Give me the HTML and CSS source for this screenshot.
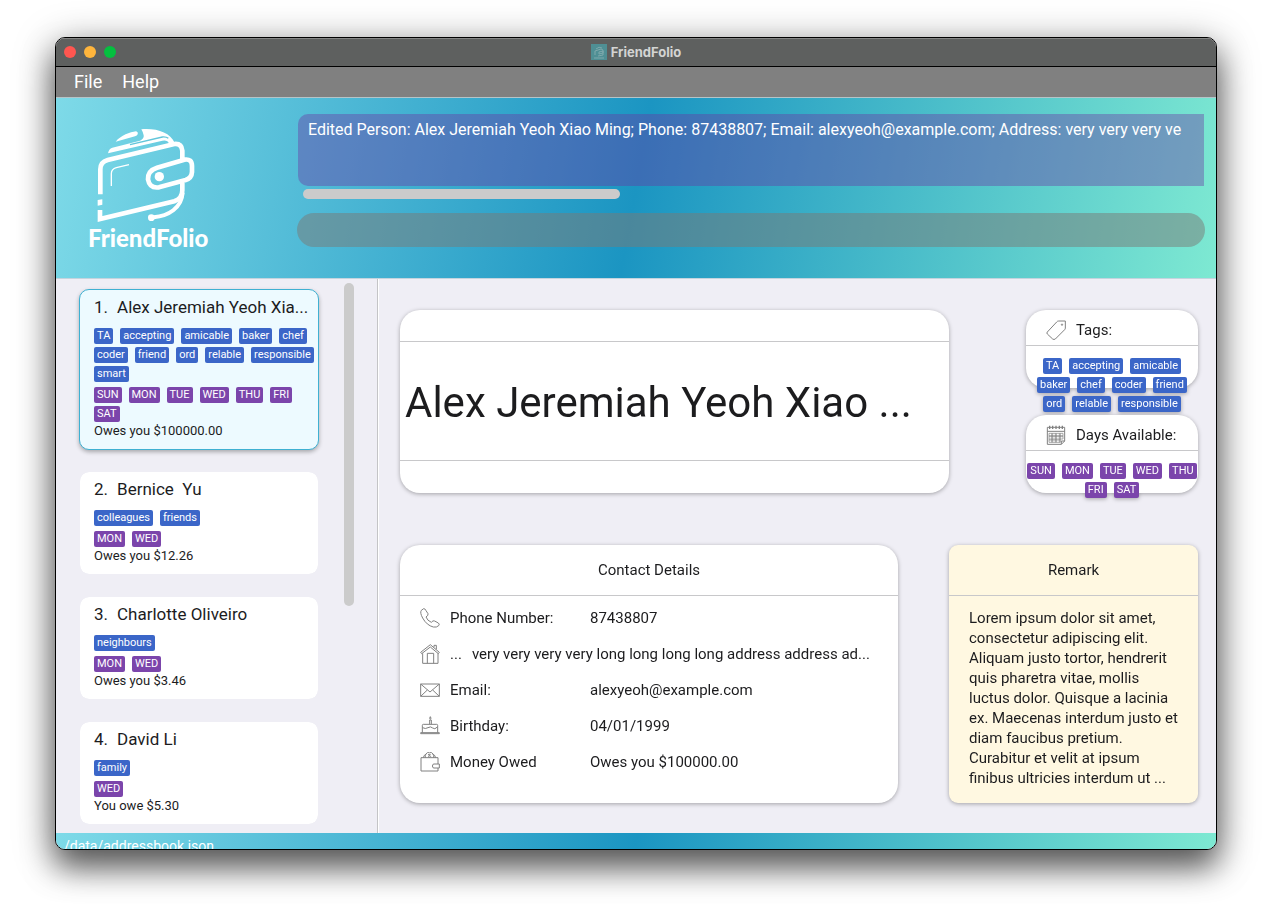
FILE: index.html
```html
<!DOCTYPE html>
<html lang="en">
<head>
<meta charset="utf-8">
<title>FriendFolio</title>
<link rel="stylesheet" href="styles.css">
</head>
<body>
<div class="window">
  <div class="titlebar">
    <div class="lights">
      <button class="light close" aria-label="Close"></button>
      <button class="light minimise" aria-label="Minimise"></button>
      <button class="light zoom" aria-label="Zoom"></button>
    </div>
    <div class="app-title">
      <svg class="app-icon" viewBox="0 0 16 16" aria-hidden="true"><rect width="16" height="16" fill="#4f8f94"/><path d="M4 11V7l6-2 2 1v5l-5 1M5 5q3-3 6-1M8 8l4-1v2l-4 1zM3 14h10" fill="none" stroke="#7fa9ac"/></svg>
      <span>FriendFolio</span>
    </div>
  </div>
  <nav class="menubar">
    <button class="menu">File</button>
    <button class="menu">Help</button>
  </nav>
  <header class="header">
    <div class="brand">
      <svg class="logo" viewBox="60 35 306 285" aria-hidden="true">
        <g fill="none" stroke="#fff" stroke-width="14">
          <path d="M76 237V162Q76 140 98 134L298 86Q320 84 322 106V136"/>
          <path d="M75 284V311L298 258Q322 250 322 225V203"/>
          <path d="M246 157L328 133Q351 129 351 152V170Q350 188 332 194L252 216Q224 220 219 192Q218 166 246 157Z"/>
          <path d="M323 232C320 278 280 302 236 306" stroke-width="12"/>
          <path d="M109 212V175Q109 161 124 157L162 148" stroke-width="4"/>
        </g>
        <g fill="#fff">
          <path d="M68 254L82 252V268L68 271Z"/>
          <circle cx="229" cy="307" r="10"/>
          <circle cx="253" cy="184" r="14"/>
          <path d="M99 114Q101 101 112 97L195 76Q208 70 206 60Q204 50 199 42C245 38 285 52 299 82L282 85Q278 73 262 76Z"/>
          <path d="M122 79C138 60 165 50 183 48Q190 50 188 57Q186 62 180 63Z"/>
        </g>
        <path d="M165 88L262 65Q274 64 280 69" fill="none" stroke="#62c6da" stroke-width="4"/>
      </svg>
      <span class="brand-name">FriendFolio</span>
    </div>
    <div class="console">
      <div class="result-wrap">
        <p class="result" role="status">Edited Person: Alex Jeremiah Yeoh Xiao Ming; Phone: 87438807; Email: alexyeoh@example.com; Address: very very very ve</p>
        <div class="hscroll"></div>
      </div>
      <input class="command" type="text" aria-label="Command">
    </div>
  </header>
  <main class="content">
    <section class="list-pane">
      <ol class="people">
        <li class="person selected">
          <h2 class="person-name"><span>1.</span><span>Alex Jeremiah Yeoh Xia...</span></h2>
          <div class="chips"><span class="chip">TA</span><span class="chip">accepting</span><span class="chip">amicable</span><span class="chip">baker</span><span class="chip">chef</span><span class="chip">coder</span><span class="chip">friend</span><span class="chip">ord</span><span class="chip">relable</span><span class="chip">responsible</span><span class="chip">smart</span></div>
          <div class="chips days"><span class="chip">SUN</span><span class="chip">MON</span><span class="chip">TUE</span><span class="chip">WED</span><span class="chip">THU</span><span class="chip">FRI</span><span class="chip">SAT</span></div>
          <p class="debt">Owes you $100000.00</p>
        </li>
        <li class="person">
          <h2 class="person-name"><span>2.</span><span>Bernice&nbsp; Yu</span></h2>
          <div class="chips"><span class="chip">colleagues</span><span class="chip">friends</span></div>
          <div class="chips days"><span class="chip">MON</span><span class="chip">WED</span></div>
          <p class="debt">Owes you $12.26</p>
        </li>
        <li class="person">
          <h2 class="person-name"><span>3.</span><span>Charlotte Oliveiro</span></h2>
          <div class="chips"><span class="chip">neighbours</span></div>
          <div class="chips days"><span class="chip">MON</span><span class="chip">WED</span></div>
          <p class="debt">Owes you $3.46</p>
        </li>
        <li class="person">
          <h2 class="person-name"><span>4.</span><span>David Li</span></h2>
          <div class="chips"><span class="chip">family</span></div>
          <div class="chips days"><span class="chip">WED</span></div>
          <p class="debt">You owe $5.30</p>
        </li>
      </ol>
      <div class="vscroll"></div>
    </section>
    <section class="detail">
      <div class="row summary">
        <article class="card name-card">
          <h1 class="full-name">Alex Jeremiah Yeoh Xiao ...</h1>
        </article>
        <div class="side">
          <article class="card side-card">
            <h3 class="side-title">
              <svg class="icon" viewBox="0 0 60 60" aria-hidden="true"><path d="M4 36L32 6Q34 3 38 3H58V24Q58 27 56 29L28 57Q24 60 20 57L4 42Q1 39 4 36Z"/><circle cx="48" cy="14" r="2"/></svg>
              Tags:
            </h3>
            <div class="chips centred inset"><span class="chip">TA</span><span class="chip">accepting</span><span class="chip">amicable</span><span class="chip">baker</span><span class="chip">chef</span><span class="chip">coder</span><span class="chip">friend</span><span class="chip">ord</span><span class="chip">relable</span><span class="chip">responsible</span></div>
          </article>
          <article class="card side-card">
            <h3 class="side-title">
              <svg class="icon" viewBox="0 0 60 60" aria-hidden="true"><path d="M4 7H56V48L46 58H4ZM4 19H56M46 58V48H56"/><path d="M11 2V12M20 2V12M30 2V12M40 2V12M49 2V12" stroke-width="4"/><path d="M9 25H51M9 32H51M9 35H51M9 42H51M9 45H43M9 52H43M9 25V52M17 25V52M20 25V52M28 25V52M31 25V52M40 25V52M43 25V52M51 25V42" stroke-width="2"/></svg>
              Days Available:
            </h3>
            <div class="chips days centred"><span class="chip">SUN</span><span class="chip">MON</span><span class="chip">TUE</span><span class="chip">WED</span><span class="chip">THU</span><span class="chip">FRI</span><span class="chip">SAT</span></div>
          </article>
        </div>
      </div>
      <div class="row info">
        <article class="card contact">
          <h3 class="card-title">Contact Details</h3>
          <dl class="fields">
            <div class="field">
              <svg class="icon" viewBox="0 0 60 60" aria-hidden="true"><path d="M4 7L11 2Q15 1 18 8L24 17Q26 22 18 27Q22 38 34 43Q39 36 44 39L55 45Q60 48 56 53Q50 59 40 57Q20 52 8 30Q-1 14 4 7Z"/></svg>
              <dt>Phone Number:</dt><dd>87438807</dd>
            </div>
            <div class="field long">
              <svg class="icon" viewBox="0 0 60 60" aria-hidden="true"><path d="M2 25L31 2L58 25L55 29L31 9L5 29ZM8 28V58H54V28M22 58V28H41V58M42 10V4H49V16"/></svg>
              <dt>...</dt><dd>very very very very long long long long address address ad...</dd>
            </div>
            <div class="field">
              <svg class="icon" viewBox="0 0 60 60" aria-hidden="true"><path d="M2 12H58V49H2ZM2 12L30 36L58 12M2 49L22 30M58 49L38 30"/></svg>
              <dt>Email:</dt><dd>alexyeoh@example.com</dd>
            </div>
            <div class="field">
              <svg class="icon" viewBox="0 0 60 60" aria-hidden="true"><path d="M2 50H58V53H2ZM7 50V28Q7 25 10 25H50Q53 25 53 28V50M8 35Q16 40 24 35T38 36T52 33M29 25V12H34V25M31 2Q27 7 31 10Q35 7 31 2Z"/></svg>
              <dt>Birthday:</dt><dd>04/01/1999</dd>
            </div>
            <div class="field">
              <svg class="icon" viewBox="0 0 60 60" aria-hidden="true"><path d="M54 36V17H3V57H54V48M58 36V48H40Q34 42 40 36ZM16 17A13 13 0 1 1 41 17M10 17Q12 8 18 7M47 17Q45 8 38 7M32 7Q24 5 25 9Q31 10 32 13Q30 17 24 14"/></svg>
              <dt>Money Owed</dt><dd>Owes you $100000.00</dd>
            </div>
          </dl>
        </article>
        <article class="card remark">
          <h3 class="card-title">Remark</h3>
          <p class="remark-text">Lorem ipsum dolor sit amet,<br>consectetur adipiscing elit.<br>Aliquam justo tortor, hendrerit<br>quis pharetra vitae, mollis<br>luctus dolor. Quisque a lacinia<br>ex. Maecenas interdum justo et<br>diam faucibus pretium.<br>Curabitur et velit at ipsum<br>finibus ultricies interdum ut ...</p>
        </article>
      </div>
    </section>
  </main>
  <footer class="statusbar">/data/addressbook.json</footer>
</div>
</body>
</html>
```
FILE: styles.css
```css
* { box-sizing: border-box; }

body {
  margin: 0;
  height: 100vh;
  padding: 37px 55px 73px;
  overflow: hidden;
  background: #fff;
  color: #1c1c1e;
  font-family: Roboto, "Liberation Sans", sans-serif;
  font-size: 15px;
  line-height: 20px;
}

h1, h2, h3, p, ol, dl, dd { margin: 0; padding: 0; font-weight: 400; }
ol { list-style: none; }
button { border: 0; padding: 0; background: none; font: inherit; color: inherit; }

.window {
  display: flex;
  flex-direction: column;
  height: 100%;
  border: 1px solid #000;
  border-radius: 10px;
  overflow: hidden;
  background: #efeef5;
  box-shadow: 0 18px 30px rgba(0, 0, 0, 0.5), 0 8px 40px rgba(0, 0, 0, 0.4);
}

.titlebar {
  display: grid;
  grid-template-columns: 1fr auto 1fr;
  align-items: center;
  flex: none;
  height: 29px;
  padding: 0 8px 2px;
  background: #5e605f;
  border-top: 1px solid #858685;
  border-bottom: 1px solid #000;
}
.lights { display: flex; gap: 8px; }
.light { width: 12px; height: 12px; border-radius: 50%; }
.close { background: #ff5650; }
.minimise { background: #ffb53c; }
.zoom { background: #04c03f; }
.app-title {
  display: flex;
  align-items: center;
  gap: 4px;
  color: #d3d4d3;
  font: 700 13px/16px Inter, sans-serif;
}
.app-icon { width: 16px; height: 16px; }

.menubar {
  display: flex;
  gap: 20px;
  flex: none;
  height: 30px;
  padding: 0 18px;
  background: #808080;
  color: #fff;
  font-size: 18px;
}

.header {
  display: flex;
  flex: none;
  height: 182px;
  padding: 16px 11px 0 0;
  border-top: 1px solid #b5c4c8;
  border-bottom: 1px solid #c4d4de;
}
.header, .statusbar {
  background: linear-gradient(100deg, #7edae8 0%, #1b95c2 50%, #7ee9d2 100%);
}
.brand {
  display: flex;
  flex-direction: column;
  flex: none;
  width: 241px;
  padding: 13px 0 0 32px;
  color: #fff;
}
.logo { width: 102px; height: 95px; margin-left: 7px; }
.brand-name { font: 900 24px/32px Lato, sans-serif; }

.console { display: flex; flex-direction: column; flex: 1; min-width: 0; }
.result-wrap { padding: 0 1px; }
.result {
  height: 72px;
  padding: 6px 0 0 10px;
  overflow: hidden;
  white-space: nowrap;
  border-radius: 10px 0 0 10px;
  background: rgba(107, 52, 162, 0.4);
  color: #fff;
  font-size: 16px;
}
.hscroll {
  width: 35%;
  height: 10px;
  margin: 3px 0 0 5px;
  border-radius: 5px;
  background: #cbcbcb;
}
.command {
  width: 100%;
  height: 34px;
  margin-top: 14px;
  padding: 0 14px;
  border: 0;
  border-radius: 17px;
  background: rgba(121, 121, 118, 0.5);
  color: #fff;
  font: inherit;
}

.content { display: flex; flex: 1; min-height: 0; }
.list-pane {
  display: flex;
  flex: none;
  width: 322px;
  padding: 0 23px;
  border-right: 1px solid #c4c4c6;
  overflow: hidden;
}
.people {
  display: flex;
  flex-direction: column;
  gap: 21px;
  flex: 1;
  min-width: 0;
  padding-top: 10px;
}
.person {
  flex: none;
  padding: 6px 0 9px 14px;
  border: 1px solid #efeef5;
  border-radius: 10px;
  background: #fff;
  background-clip: padding-box;
}
.person.selected {
  background: #edfaff;
  border-color: #3fb0d2;
  box-shadow: 0 2px 4px rgba(0, 0, 0, 0.3);
}
.person-name {
  display: flex;
  gap: 9px;
  margin-bottom: 10px;
  font-size: 17px;
  line-height: 22px;
  white-space: nowrap;
}
.chips { display: flex; flex-wrap: wrap; gap: 3px 7px; }
.chip {
  padding: 0 3px;
  border-radius: 2px;
  background: #3b66c8;
  color: #fff;
  font-size: 11px;
  line-height: 16px;
}
.days .chip { background: #7b45ab; }
.person .chips { margin-right: 3px; }
.person .days { margin-top: 5px; }
.debt { font-size: 13px; line-height: 18px; }
.vscroll {
  flex: none;
  width: 10px;
  height: 323px;
  margin: 4px 0 0 25px;
  border-radius: 5px;
  background: #cbcbcb;
}

.detail {
  display: flex;
  flex-direction: column;
  gap: 52px;
  flex: 1;
  min-width: 0;
  padding: 31px 18px 30px 21px;
  border-left: 1px solid #fff;
}
.row { display: flex; min-height: 0; }
.summary { gap: 77px; flex: 183; }
.info { gap: 51px; flex: 257; }
.card {
  border-radius: 20px;
  background: #fff;
  filter: drop-shadow(0 1px 2px rgba(0, 0, 0, 0.32));
}
.name-card {
  display: flex;
  flex: 1;
  min-width: 0;
  padding: 31px 0 32px;
}
.full-name {
  display: flex;
  align-items: center;
  flex: 1;
  padding: 4px 5px 0;
  border-top: 1px solid #c8c8ca;
  border-bottom: 1px solid #c8c8ca;
  font-size: 42px;
  line-height: 52px;
  white-space: nowrap;
}
.side { display: flex; flex-direction: column; gap: 27px; width: 172px; }
.side-card { flex: 1; min-height: 0; }
.side-title {
  display: flex;
  align-items: center;
  gap: 10px;
  height: 36px;
  padding: 5px 0 0 20px;
  margin-bottom: 12px;
  border-bottom: 1px solid #c8c8ca;
  font-size: 15px;
  white-space: nowrap;
}
.centred { justify-content: center; }
.inset { padding: 0 10px; }
.icon {
  flex: none;
  width: 20px;
  height: 20px;
  fill: none;
  stroke: #808080;
  stroke-width: 3px;
}

.contact { flex: 2; min-width: 0; }
.remark { flex: 1; min-width: 0; border-radius: 9px; background: #fff8e1; }
.card-title {
  height: 51px;
  border-bottom: 1px solid #c8c8ca;
  font-size: 15px;
  line-height: 50px;
  text-align: center;
}
.fields {
  display: flex;
  flex-direction: column;
  gap: 16px;
  padding: 12px 20px;
}
.field { display: flex; align-items: center; gap: 10px; white-space: nowrap; }
.field dt { width: 130px; }
.field.long dt { width: auto; }
.remark-text { padding: 12px 20px; white-space: nowrap; }

.statusbar {
  flex: none;
  height: 16px;
  padding-left: 8px;
  overflow: hidden;
  color: #fff;
  font-size: 14px;
  line-height: 26px;
}
```
